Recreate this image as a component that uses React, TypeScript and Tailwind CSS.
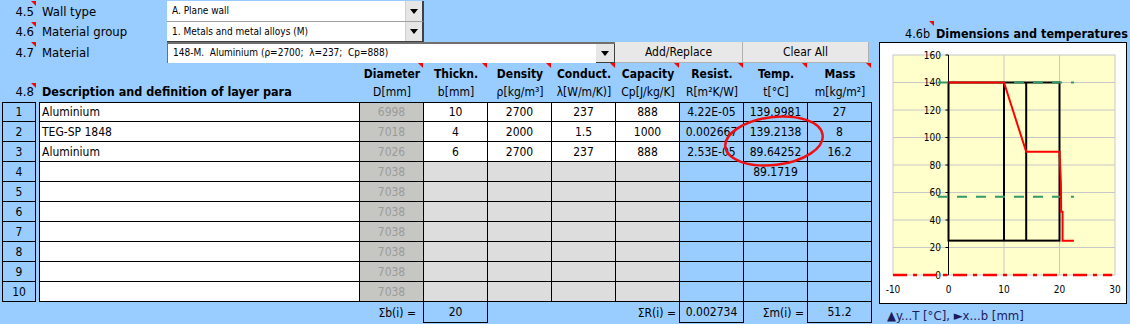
import React from 'react'

// red comment marker in the top-right corner of a cell
const Marker: React.FC<{ className?: string }> = ({ className }) => (
  <span className={`absolute w-0 h-0 border-t-[5px] border-l-[5px] border-t-[#ff0000] border-l-transparent ${className ?? 'top-0 right-0'}`} />
)

const DownArrow: React.FC = () => (
  <span className="w-0 h-0 border-l-[4px] border-r-[4px] border-t-[5px] border-l-transparent border-r-transparent border-t-black" />
)

interface Layer {
  name: string
  d: string
  b: string
  rho: string
  lam: string
  cp: string
  r: string
  t: string
  m: string
}

const layers: Layer[] = [
  { name: 'Aluminium', d: '6998', b: '10', rho: '2700', lam: '237', cp: '888', r: '4.22E-05', t: '139.9981', m: '27' },
  { name: 'TEG-SP 1848', d: '7018', b: '4', rho: '2000', lam: '1.5', cp: '1000', r: '0.002667', t: '139.2138', m: '8' },
  { name: 'Aluminium', d: '7026', b: '6', rho: '2700', lam: '237', cp: '888', r: '2.53E-05', t: '89.64252', m: '16.2' },
  { name: '', d: '7038', b: '', rho: '', lam: '', cp: '', r: '', t: '89.1719', m: '' },
  { name: '', d: '7038', b: '', rho: '', lam: '', cp: '', r: '', t: '', m: '' },
  { name: '', d: '7038', b: '', rho: '', lam: '', cp: '', r: '', t: '', m: '' },
  { name: '', d: '7038', b: '', rho: '', lam: '', cp: '', r: '', t: '', m: '' },
  { name: '', d: '7038', b: '', rho: '', lam: '', cp: '', r: '', t: '', m: '' },
  { name: '', d: '7038', b: '', rho: '', lam: '', cp: '', r: '', t: '', m: '' },
  { name: '', d: '7038', b: '', rho: '', lam: '', cp: '', r: '', t: '', m: '' },
]

const headers = [
  { top: 'Diameter', unit: 'D[mm]' },
  { top: 'Thickn.', unit: 'b[mm]' },
  { top: 'Density', unit: 'ρ[kg/m³]' },
  { top: 'Conduct.', unit: 'λ[W/m/K)]' },
  { top: 'Capacity', unit: 'Cp[J/kg/K]' },
  { top: 'Resist.', unit: 'R[m²K/W]' },
  { top: 'Temp.', unit: 't[°C]' },
  { top: 'Mass', unit: 'm[kg/m²]' },
]

// chart scales (plot area inside the white box)
const X = (v: number) => 13 + (v + 10) * 5.55
const Y = (t: number) => 232 - t * 1.375

const Chart: React.FC = () => {
  const redPts = [[0, 140], [10, 140], [14, 89.6], [20, 89.6], [20.25, 67], [20.3, 46], [20.55, 46], [20.55, 25], [22.6, 25]]
  return (
    <svg width="246" height="260" className="block">
      <rect x={X(-10)} y={Y(160)} width={X(30) - X(-10)} height={Y(0) - Y(160)} fill="#ffffcc" stroke="#c8c8c8" />
      {[20, 40, 60, 80, 100, 120, 140].map((t) => (
        <line key={t} x1={X(-10)} x2={X(30)} y1={Y(t)} y2={Y(t)} stroke="#c8c8c8" />
      ))}
      {[10, 20].map((v) => (
        <line key={v} x1={X(v)} x2={X(v)} y1={Y(160)} y2={Y(0)} stroke="#c8c8c8" />
      ))}
      {/* y axis */}
      <line x1={X(0)} x2={X(0)} y1={Y(160)} y2={Y(0)} stroke="#000" />
      {[0, 20, 40, 60, 80, 100, 120, 140, 160].map((t) => (
        <g key={t}>
          <line x1={X(0) - 3} x2={X(0)} y1={Y(t)} y2={Y(t)} stroke="#000" />
          <text x={61} y={Y(t) + 3.5} textAnchor="end" fontSize="10" fill="#000">{t}</text>
        </g>
      ))}
      {[-10, 0, 10, 20, 30].map((v) => (
        <text key={v} x={X(v)} y={250} textAnchor="middle" fontSize="10" fill="#000">{v}</text>
      ))}
      {/* layers */}
      <g stroke="#000" strokeWidth="2" fill="none">
        <rect x={X(0)} y={Y(140)} width={X(20) - X(0)} height={Y(25) - Y(140)} />
        <line x1={X(10)} x2={X(10)} y1={Y(140)} y2={Y(25)} />
        <line x1={X(14)} x2={X(14)} y1={Y(140)} y2={Y(25)} />
      </g>
      <g stroke="#339966" strokeWidth="2" strokeDasharray="10 9">
        <line x1={X(-1.9)} x2={X(22.6)} y1={Y(140)} y2={Y(140)} />
        <line x1={X(-1.9)} x2={X(22.6)} y1={Y(57)} y2={Y(57)} />
      </g>
      <polyline points={redPts.map(([v, t]) => `${X(v)},${Y(t)}`).join(' ')} fill="none" stroke="#ff0000" strokeWidth="2" />
      <line x1={X(-10)} x2={X(29.5)} y1={Y(0)} y2={Y(0)} stroke="#ff0000" strokeWidth="2.5" strokeDasharray="14 6 4 6" />
    </svg>
  )
}

const App: React.FC = () => {
  return (
    <div className="relative w-[1130px] h-[324px] overflow-hidden bg-[#99ccff] flex text-black font-['DejaVu_Sans_Condensed','DejaVu_Sans',sans-serif]">
      {/* Left: inputs and layer table */}
      <div className="w-[872px] flex flex-col">
        <div className="pt-[1px] flex flex-col text-[13px]">
          <div className="flex h-[21px]">
            <div className="relative w-[167px] flex items-center">
              <span className="w-[34px] text-right">4.5</span>
              <span className="ml-[8px]">Wall type</span>
              <Marker className="top-0 left-[31px]" />
            </div>
            <div className="w-[257px] flex bg-white border-r-2 border-b border-r-[#404040] border-b-[#a0a0a0]">
              <span className="flex-1 pl-[5px] text-[10px] leading-[20px]">A. Plane wall</span>
              <span className="w-[17px] flex items-center justify-center bg-[#e6e6e6] border-l border-[#d0d0d0]"><DownArrow /></span>
            </div>
          </div>
          <div className="flex h-[20px]">
            <div className="relative w-[167px] flex items-center">
              <span className="w-[34px] text-right">4.6</span>
              <span className="ml-[8px]">Material group</span>
              <Marker className="top-0 left-[31px]" />
            </div>
            <div className="w-[257px] flex bg-white border-r-2 border-b border-r-[#404040] border-b-[#404040]">
              <span className="flex-1 pl-[5px] text-[10px] leading-[19px]">1. Metals and metal alloys (M)</span>
              <span className="w-[17px] flex items-center justify-center bg-[#e6e6e6] border-l border-[#d0d0d0]"><DownArrow /></span>
            </div>
          </div>
          <div className="flex h-[21px]">
            <div className="relative w-[167px] flex items-center">
              <span className="w-[34px] text-right">4.7</span>
              <span className="ml-[8px]">Material</span>
              <Marker className="top-0 left-[31px]" />
            </div>
            <div className="w-[448px] flex bg-white border-t-2 border-l border-[#707070]">
              <span className="flex-1 pl-[5px] text-[10px] leading-[18px]">148-M.&nbsp; Aluminium (ρ=2700;&nbsp; λ=237;&nbsp; Cp=888)</span>
              <span className="w-[19px] flex items-center justify-center bg-[#e6e6e6] border-r border-b border-[#404040]"><DownArrow /></span>
            </div>
            <button className="w-[128px] bg-[#e8e8e8] border-r border-b border-[#b0b0b0] text-[12px]">Add/Replace</button>
            <button className="w-[126px] bg-[#e8e8e8] border-r border-b border-[#b0b0b0] text-[12px]">Clear All</button>
          </div>
        </div>

        {/* Table header */}
        <div className="flex h-[39px]">
          <div className="relative w-[360px] flex items-end pb-[1px] text-[13px] leading-[18px]">
            <span className="w-[34px] text-right">4.8</span>
            <span className="ml-[8px] font-bold text-[12.5px]">Description and definition of layer para</span>
            <Marker className="top-[20px] left-[31px]" />
          </div>
          {headers.map((h) => (
            <div key={h.top} className="relative w-[64px] flex flex-col items-center pt-[2px] text-[12px]">
              <span className="h-[18px] leading-[18px] font-bold">{h.top}</span>
              <span className="h-[19px] leading-[19px]">{h.unit}</span>
              <Marker className="top-0 right-[1px]" />
            </div>
          ))}
        </div>

        {/* Table rows */}
        <div className="flex flex-col text-[12px]">
          {layers.map((l, i) => {
            const filled = i < 3
            const inCell = filled ? 'bg-white' : 'bg-[#dddddd]'
            const top = i === 0 ? 'border-t' : ''
            return (
              <div key={i} className="flex h-[20px]">
                <div className={`ml-[2px] w-[34px] flex items-center justify-center border-l border-r border-b border-black ${top}`}>{i + 1}</div>
                <div className="w-[3px]" />
                <div className={`w-[321px] flex items-center pl-[2px] bg-white border-l border-r border-b border-black ${top}`}>{l.name}</div>
                <div className={`w-[64px] flex items-center justify-center bg-[#c6c6c2] text-[#9b9b9b] border-r border-b border-black ${top}`}>{l.d}</div>
                <div className={`w-[64px] flex items-center justify-center ${inCell} border-r border-b border-black ${top}`}>{l.b}</div>
                <div className={`w-[64px] flex items-center justify-center ${inCell} border-r border-b border-black ${top}`}>{l.rho}</div>
                <div className={`w-[64px] flex items-center justify-center ${inCell} border-r border-b border-black ${top}`}>{l.lam}</div>
                <div className={`w-[64px] flex items-center justify-center ${inCell} border-r border-b border-black ${top}`}>{l.cp}</div>
                <div className={`w-[64px] flex items-center justify-center border-r border-b border-black ${top}`}>{l.r}</div>
                <div className={`w-[64px] flex items-center justify-center border-r border-b border-black ${top}`}>{l.t}</div>
                <div className={`w-[64px] flex items-center justify-center border-r border-b border-black ${top}`}>{l.m}</div>
              </div>
            )
          })}
          {/* Sums */}
          <div className="flex h-[21px]">
            <div className="w-[423px] flex items-center justify-end pr-[7px]">Σb(i) =</div>
            <div className="w-[65px] flex items-center justify-center border-l border-r border-b border-black">20</div>
            <div className="w-[191px] flex items-center justify-end pr-[3px]">ΣR(i) =</div>
            <div className="w-[65px] flex items-center justify-center border-l border-r border-b border-black">0.002734</div>
            <div className="w-[63px] flex items-center justify-end pr-[3px]">Σm(i) =</div>
            <div className="w-[65px] flex items-center justify-center border-l border-r border-b border-black">51.2</div>
          </div>
        </div>
      </div>

      {/* Right: chart */}
      <div className="flex-1 flex flex-col pl-[7px]">
        <div className="relative h-[42px] pt-[26px] pl-[26px] whitespace-nowrap text-[12.5px] leading-[16px]">
          <span>4.6b</span>
          <span className="ml-[6px] font-bold">Dimensions and temperatures</span>
          <Marker className="top-[21px] left-[50px]" />
        </div>
        <div className="w-[248px] h-[262px] bg-white border border-black">
          <Chart />
        </div>
        <div className="mt-[4px] pl-[8px] text-[13px] leading-[16px] text-[#1c1c5c] whitespace-nowrap">▲y...T [°C], ►x...b [mm]</div>
      </div>

      {/* hand-drawn highlight */}
      <svg className="absolute left-[720px] top-[110px]" width="110" height="64">
        <ellipse cx="54" cy="31" rx="49" ry="24" fill="none" stroke="#ee1111" strokeWidth="2.5" transform="rotate(-7 54 31)" />
      </svg>
    </div>
  )
}

export default App
